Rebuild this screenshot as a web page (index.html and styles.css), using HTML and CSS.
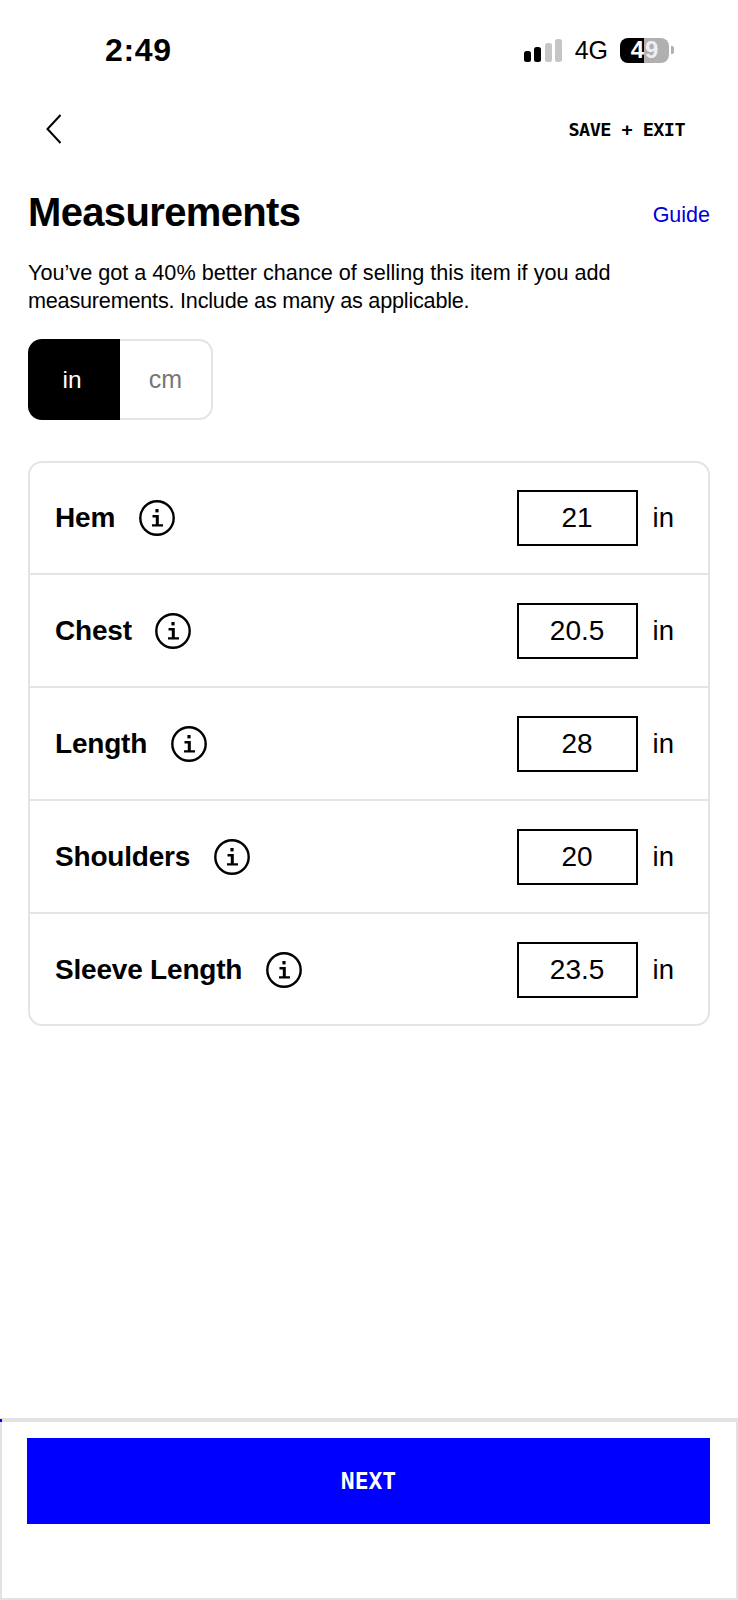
FILE: index.html
```html
<!DOCTYPE html>
<html lang="en">
<head>
    <meta charset="UTF-8">
    <title>Measurements</title>
    <link rel="stylesheet" href="styles.css">
</head>
<body>
    <div class="page">
        <div class="status">
            <span class="time">2:49</span>
            <div class="status-right">
                <svg class="signal" width="38" height="23" viewBox="0 0 38 23">
                    <rect x="0" y="12" width="7" height="11" rx="2.5" fill="#000"/>
                    <rect x="10" y="8" width="7" height="15" rx="2.5" fill="#000"/>
                    <rect x="21" y="4" width="7" height="19" rx="2.5" fill="#c6c6c6"/>
                    <rect x="31" y="0" width="7" height="23" rx="2.5" fill="#c6c6c6"/>
                </svg>
                <span class="net">4G</span>
                <div class="battery"><span class="battery-num">4</span><span class="battery-num battery-dim">9</span></div>
                <span class="battery-cap"></span>
            </div>
        </div>

        <div class="nav">
            <svg class="back" width="16" height="30" viewBox="0 0 16 30">
                <path d="M14.5 1 L1.5 15 L14.5 29" fill="none" stroke="#000" stroke-width="2"/>
            </svg>
            <span class="save">SAVE + EXIT</span>
        </div>

        <div class="content">
            <div class="title-row">
                <h1>Measurements</h1>
                <a class="guide">Guide</a>
            </div>
            <p class="intro">You’ve got a 40% better chance of selling this item if you add <span class="intro-end">measurements. Include as many as applicable.</span></p>

            <div class="units">
                <div class="unit unit-on">in</div>
                <div class="unit unit-off">cm</div>
            </div>

            <div class="card">
                <div class="row">
                    <span class="label">Hem</span>
                    <svg class="info" viewBox="0 0 36 36"><use href="#i-info"/></svg>
                    <div class="value">21</div>
                    <span class="suffix">in</span>
                </div>
                <div class="row">
                    <span class="label">Chest</span>
                    <svg class="info" viewBox="0 0 36 36"><use href="#i-info"/></svg>
                    <div class="value">20.5</div>
                    <span class="suffix">in</span>
                </div>
                <div class="row">
                    <span class="label">Length</span>
                    <svg class="info" viewBox="0 0 36 36"><use href="#i-info"/></svg>
                    <div class="value">28</div>
                    <span class="suffix">in</span>
                </div>
                <div class="row">
                    <span class="label">Shoulders</span>
                    <svg class="info" viewBox="0 0 36 36"><use href="#i-info"/></svg>
                    <div class="value">20</div>
                    <span class="suffix">in</span>
                </div>
                <div class="row">
                    <span class="label">Sleeve Length</span>
                    <svg class="info" viewBox="0 0 36 36"><use href="#i-info"/></svg>
                    <div class="value">23.5</div>
                    <span class="suffix">in</span>
                </div>
            </div>
        </div>

        <div class="footer">
            <span class="tick"></span>
            <div class="next">NEXT</div>
        </div>
    </div>

    <svg width="0" height="0" class="defs">
        <symbol id="i-info" viewBox="0 0 36 36">
            <circle cx="18" cy="18" r="16.7" fill="none" stroke="#000" stroke-width="2.4"/>
            <rect x="16.4" y="9" width="3.2" height="3.4" fill="#000"/>
            <path d="M13.5 15 H19.8 V24.2 H24 V26.6 H13 V24.2 H16.8 V17.4 H13.5 Z" fill="#000"/>
        </symbol>
    </svg>
</body>
</html>
```

FILE: styles.css
```css
*{margin:0;padding:0;box-sizing:border-box;}
body{
    margin:0;
    background-color:#fff;
    color:#000;
    font-family:"Liberation Sans",Arial,sans-serif;
}
.page{
    display:flex;
    flex-direction:column;
    width:738px;
    height:1600px;
}
.defs{
    position:absolute;
}

/* status bar */
.status{
    display:flex;
    justify-content:space-between;
    align-items:center;
    height:100px;
    padding:0 64px 0 105px;
}
.time{
    font-size:32px;
    font-weight:bold;
    letter-spacing:.7px;
}
.status-right{
    display:flex;
    align-items:center;
}
.net{
    margin-left:13px;
    font-size:25px;
}
.battery{
    display:flex;
    justify-content:center;
    align-items:center;
    gap:1px;
    width:49px;
    height:25px;
    margin-left:12px;
    border-radius:8px;
    background:linear-gradient(to right,#000 50%,#b0b0b0 50%);
}
.battery-num{
    color:#fff;
    font-size:24px;
    font-weight:bold;
}
.battery-dim{
    color:#eee;
}
.battery-cap{
    width:3px;
    height:8px;
    margin-left:2px;
    border-radius:0 2px 2px 0;
    background-color:#b0b0b0;
}

/* top nav */
.nav{
    display:flex;
    justify-content:space-between;
    align-items:center;
    height:58px;
    padding:0 53px 0 46px;
}
.save{
    font-family:"DejaVu Sans Mono",monospace;
    font-size:18.5px;
    font-weight:bold;
    letter-spacing:-.55px;
}

.content{
    flex:1;
    padding:0 28px;
}
.title-row{
    display:flex;
    justify-content:space-between;
    align-items:center;
    height:56px;
    margin-top:26px;
}
h1{
    font-size:40px;
    font-weight:bold;
    letter-spacing:-.65px;
}
.guide{
    margin-top:6px;
    color:#0000d6;
    font-size:21.5px;
}
.intro{
    width:620px;
    margin-top:19px;
    font-size:21.65px;
    line-height:28px;
}
.intro-end{
    display:block;
    letter-spacing:-.22px;
}

/* in / cm switch */
.units{
    display:flex;
    width:185px;
    height:81px;
    margin-top:24px;
}
.unit{
    display:flex;
    justify-content:center;
    align-items:center;
    font-size:25px;
}
.unit-on{
    width:92px;
    padding-right:4px;
    border-radius:14px 0 0 14px;
    background-color:#000;
    color:#fff;
    font-size:24.5px;
}
.unit-off{
    flex:1;
    border:2px solid #e4e4e4;
    border-left:none;
    border-radius:0 14px 14px 0;
    color:#777;
}

/* measurement list */
.card{
    width:682px;
    margin-top:41px;
    border:2px solid #e4e4e4;
    border-radius:14px;
}
.row{
    display:flex;
    align-items:center;
    height:113px;
    padding:0 34px 0 25px;
    border-bottom:2px solid #e4e4e4;
}
.row:first-child{
    height:112px;
}
.row:last-child{
    height:110px;
    padding-top:2px;
    border-bottom:none;
}
.label{
    font-size:28px;
    font-weight:bold;
    letter-spacing:-.2px;
}
.info{
    width:36px;
    height:36px;
    margin-left:23.5px;
}
.value{
    display:flex;
    justify-content:center;
    align-items:center;
    width:121px;
    height:56px;
    margin-left:auto;
    border:2px solid #000;
    font-size:28px;
}
.suffix{
    margin-left:15px;
    font-size:27.5px;
}

/* bottom bar */
.footer{
    position:relative;
    height:182px;
    padding:16px 26px 0 25px;
    border:2px solid #e2e2e2;
    border-top-width:4px;
}
.tick{
    position:absolute;
    top:-3px;
    left:-2px;
    width:2px;
    height:3px;
    background-color:#0000ff;
}
.next{
    display:flex;
    justify-content:center;
    align-items:center;
    height:86px;
    background-color:#0000ff;
    color:#fff;
    font-family:"DejaVu Sans Mono",monospace;
    font-size:23px;
    font-weight:bold;
}
```
